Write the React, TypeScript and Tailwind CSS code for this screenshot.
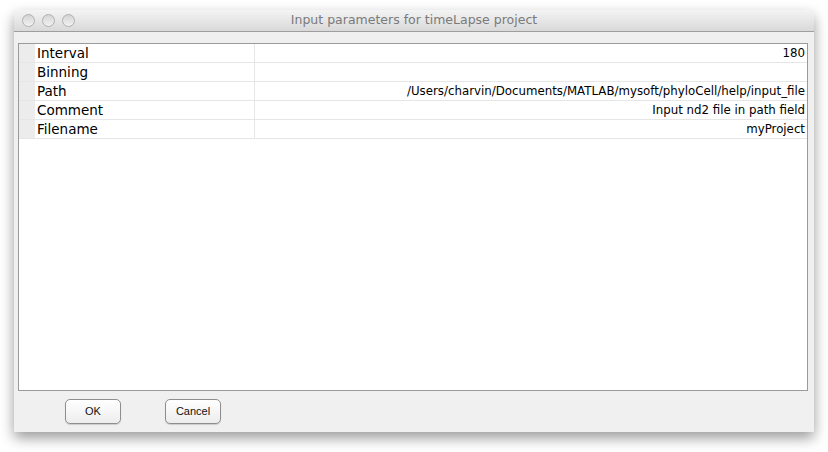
import React from 'react'

const rows = [
  { label: 'Interval', value: '180' },
  { label: 'Binning', value: '' },
  { label: 'Path', value: '/Users/charvin/Documents/MATLAB/mysoft/phyloCell/help/input_file' },
  { label: 'Comment', value: 'Input nd2 file in path field' },
  { label: 'Filename', value: 'myProject' },
]

function Light() {
  return (
    <div className="w-[13px] h-[13px] rounded-full border border-[#b0b0b0] bg-gradient-to-b from-[#d4d4d4] to-[#f2f2f2]" />
  )
}

function MacButton({ children }: { children: React.ReactNode }) {
  return (
    <button
      type="button"
      className="w-[56px] h-[25px] rounded-[5px] border border-[#8e8e8e] bg-gradient-to-b from-[#ffffff] to-[#ededed] shadow-[0_1px_1px_rgba(0,0,0,0.15)] text-[11px] text-[#111] font-['Liberation_Sans',sans-serif] leading-none"
    >
      {children}
    </button>
  )
}

export default function App() {
  return (
    <div className="w-[828px] h-[452px] bg-white pt-[10px] pl-[14px]">
      <div className="w-[800px] h-[422px] flex flex-col bg-[#f0f0f0] rounded-t-[5px] shadow-[0_6px_14px_rgba(0,0,0,0.4)]">
        {/* title bar */}
        <div className="relative h-[22px] flex items-center rounded-t-[5px] border-b border-[#9e9e9e] bg-gradient-to-b from-[#f4f4f4] to-[#d9d9d9]">
          <div className="flex gap-[7px] pl-[8px]">
            <Light />
            <Light />
            <Light />
          </div>
          <div className="absolute inset-0 flex items-center justify-center text-[12.5px] text-[#7a7a7a] font-['DejaVu_Sans',sans-serif]">
            Input parameters for timeLapse project
          </div>
        </div>

        {/* table */}
        <div className="ml-[4px] mt-[11px] w-[790px] h-[348px] border border-[#9a9a9a] bg-white">
          {rows.map(r => (
            <div key={r.label} className="flex h-[19px] border-b border-[#e6e6e6]">
              <div className="w-[16px] bg-[#ececec]" />
              <div className="w-[220px] pl-[2px] border-r border-[#e6e6e6] text-[13.5px] leading-[19px] text-black font-['DejaVu_Sans',sans-serif]">
                {r.label}
              </div>
              <div className="flex-1 pr-[2px] text-right text-[11.8px] leading-[19px] text-black font-['DejaVu_Sans',sans-serif]">
                {r.value}
              </div>
            </div>
          ))}
        </div>

        {/* buttons */}
        <div className="flex gap-[44px] pl-[51px] mt-[8px]">
          <MacButton>OK</MacButton>
          <MacButton>Cancel</MacButton>
        </div>
      </div>
    </div>
  )
}
